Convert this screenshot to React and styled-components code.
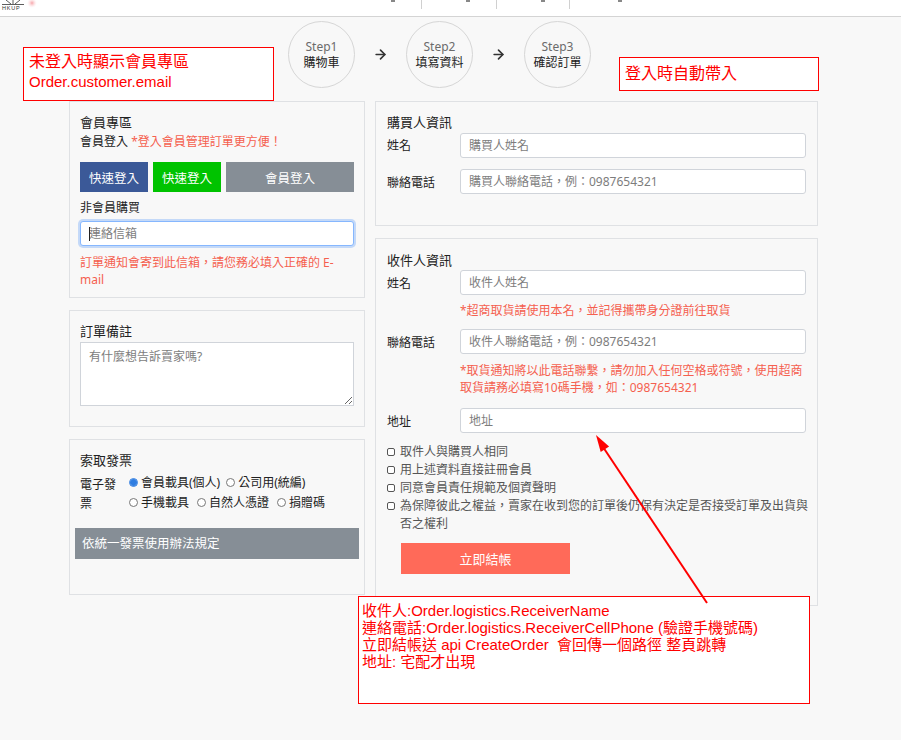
import React from 'react';
import styled, { createGlobalStyle } from 'styled-components';
import { ArrowRight } from 'lucide-react';

const GlobalStyle = createGlobalStyle`
  * { box-sizing: border-box; }
  body {
    margin: 0;
    background: #f8f8f8;
    font-family: "Noto Sans", "Noto Sans CJK TC", sans-serif;
    color: #222;
  }
`;

const Page = styled.div`
  position: relative;
  min-height: 740px;
  overflow: hidden;
`;

// top bar (mostly scrolled out of view)
const Header = styled.header`
  height: 17px;
  background: #fff;
  border-bottom: 1px solid #d4d4d4;
  display: flex;
  align-items: flex-start;
  overflow: hidden;
`;

const Logo = styled.svg`
  width: 40px;
  height: 16px;
  flex: none;
`;

const Nav = styled.nav`
  display: flex;
  margin-left: 306px;
`;

const NavItem = styled.div`
  position: relative;
  width: ${(p) => p.$w}px;
  height: 9px;
  border-left: 1px solid ${(p) => (p.$divided ? '#d0d0d0' : 'transparent')};

  &::before {
    content: '';
    position: absolute;
    top: 0;
    left: ${(p) => p.$mark}px;
    width: 4px;
    height: 2px;
    background: #888;
  }
`;

const Steps = styled.div`
  display: flex;
  align-items: center;
  justify-content: center;
  width: 749px;
  margin-left: 69px;
  padding: 4px 8px 13px 0;
`;

const StepCircle = styled.div`
  width: 67px;
  height: 67px;
  border: 1px solid #d6d6d6;
  border-radius: 50%;
  display: flex;
  flex-direction: column;
  align-items: center;
  justify-content: center;
  font-size: 12px;
  line-height: 16px;
  color: #222;

  span {
    color: #6b6b6b;
  }
`;

const StepArrow = styled.div`
  width: 51px;
  display: flex;
  justify-content: center;
  color: #333;
`;

const Columns = styled.div`
  display: flex;
  align-items: flex-start;
  gap: 10px;
  margin-left: 69px;
`;

const Column = styled.div`
  width: ${(p) => p.$w}px;
  display: flex;
  flex-direction: column;
  gap: 12px;
`;

const Panel = styled.section`
  background: #f8f8f8;
  border: 1px solid #dfe1e4;
  padding: ${(p) => p.$pad};
`;

const Title = styled.h3`
  margin: 0;
  font-size: 13px;
  line-height: 20px;
  font-weight: 400;
  color: #222;
`;

const Line = styled.div`
  font-size: 12px;
  line-height: 20px;
  margin-top: ${(p) => p.$mt || 0}px;
  color: #222;
`;

const Red = styled.span`
  color: #f5604f;
`;

const Hint = styled.div`
  font-size: 12px;
  line-height: 17px;
  color: #f5604f;
  margin-top: ${(p) => p.$mt || 0}px;
  grid-column: ${(p) => (p.$inGrid ? 2 : 'auto')};
`;

const ButtonRow = styled.div`
  display: grid;
  grid-template-columns: 68px 68px 1fr;
  gap: 5px;
  margin-top: 10px;
`;

const LoginButton = styled.button`
  height: 30px;
  border: none;
  border-radius: 0;
  background: ${(p) => p.$bg};
  color: #fff;
  font-family: inherit;
  font-size: 12.5px;
  padding: 0;
`;

const InputWrap = styled.div`
  position: relative;
  margin-top: ${(p) => p.$mt || 0}px;

  &::after {
    content: '';
    display: ${(p) => (p.$caret ? 'block' : 'none')};
    position: absolute;
    left: 9px;
    top: 6px;
    width: 1px;
    height: 14px;
    background: #222;
  }
`;

const TextInput = styled.input`
  display: block;
  width: 100%;
  height: 25px;
  padding: 0 8px;
  background: #fff;
  border: 1px solid ${(p) => (p.$focused ? '#86b7fe' : '#d0d4da')};
  border-radius: 3px;
  box-shadow: ${(p) => (p.$focused ? '0 0 0 2px rgba(100,160,250,0.35)' : 'none')};
  font-family: inherit;
  font-size: 12px;
  color: #222;
  outline: none;

  &::placeholder {
    color: #7d7d7d;
  }
`;

const NoteArea = styled.textarea`
  display: block;
  width: 100%;
  height: 64px;
  margin-top: 1px;
  padding: 5px 8px;
  background: #fff;
  border: 1px solid #d0d4da;
  border-radius: 0;
  font-family: inherit;
  font-size: 12px;
  line-height: 17px;
  outline: none;

  &::placeholder {
    color: #7d7d7d;
  }
`;

const InvoiceRow = styled.div`
  display: grid;
  grid-template-columns: 42px 1fr;
  column-gap: 7px;
  margin-top: 2px;
`;

const InvoiceLabel = styled.div`
  font-size: 12px;
  line-height: 19px;
  padding-top: 3px;
`;

const Options = styled.div`
  display: flex;
  flex-wrap: wrap;
  font-size: 12px;
  line-height: 19px;
`;

const Option = styled.label`
  display: flex;
  align-items: center;
  margin-right: ${(p) => p.$mr}px;
  white-space: nowrap;
`;

const Radio = styled.input.attrs({ type: 'radio' })`
  appearance: none;
  width: 9px;
  height: 9px;
  margin: 0 3px 0 0;
  border-radius: 50%;
  border: 1px solid #777;
  background: #fff;

  &:checked {
    border-color: #2f7de1;
    background: radial-gradient(circle, #2f7de1 0 2.6px, #fff 3.2px);
    box-shadow: inset 0 0 0 1px #2f7de1;
  }
`;

const GrayBar = styled.div`
  margin: 15px -5px 0;
  height: 31px;
  background: #868e96;
  color: #fff;
  font-size: 12.5px;
  line-height: 31px;
  padding-left: 7px;
`;

const FieldGrid = styled.div`
  display: grid;
  grid-template-columns: 73px 1fr;
  align-items: center;
`;

const FieldLabel = styled.label`
  font-size: 12px;
  color: #222;
  margin-top: ${(p) => p.$mt || 0}px;
`;

const Checks = styled.div`
  margin: 10px -6px 0 0;
  display: flex;
  flex-direction: column;
`;

const CheckItem = styled.label`
  display: flex;
  align-items: flex-start;
  font-size: 12px;
  line-height: 18px;
  color: #555;
`;

const CheckBox = styled.input.attrs({ type: 'checkbox' })`
  appearance: none;
  flex: none;
  width: 8px;
  height: 8px;
  margin: 5px 5px 0 0;
  border: 1px solid #555;
  border-radius: 2px;
  background: #fff;
`;

const CheckoutButton = styled.button`
  display: block;
  width: 169px;
  height: 31px;
  margin: 10px 0 0 14px;
  border: none;
  background: #ff6a59;
  color: #fff;
  font-family: inherit;
  font-size: 13px;
`;

// red sticky annotations laid over the page
const Note = styled.div`
  position: absolute;
  left: ${(p) => p.$left}px;
  top: ${(p) => p.$top}px;
  width: ${(p) => p.$w}px;
  height: ${(p) => p.$h}px;
  padding: ${(p) => p.$pad};
  background: #fff;
  border: 1px solid #f00;
  color: #f00;
  font-family: "Liberation Sans", "Noto Sans CJK TC", sans-serif;
  font-size: 15px;
  line-height: 17px;
`;

const NoteBig = styled.div`
  font-size: 16px;
  line-height: 20px;
`;

const NoteSmall = styled.div`
  font-size: 15px;
  line-height: 20px;
`;

const Overlay = styled.svg`
  position: absolute;
  left: 0;
  top: 0;
  pointer-events: none;
`;

const steps = [
  ['Step1', '購物車'],
  ['Step2', '填寫資料'],
  ['Step3', '確認訂單'],
];

const checks = [
  '取件人與購買人相同',
  '用上述資料直接註冊會員',
  '同意會員責任規範及個資聲明',
  '為保障彼此之權益，賣家在收到您的訂單後仍保有決定是否接受訂單及出貨與否之權利',
];

export default function App() {
  return (
    <Page>
      <GlobalStyle />
      <Header>
        <Logo viewBox="0 0 40 16">
          <defs>
            <radialGradient id="glow">
              <stop offset="0" stopColor="#f7a3a8" />
              <stop offset="1" stopColor="#fde8ea" stopOpacity="0" />
            </radialGradient>
          </defs>
          <circle cx="32" cy="3" r="5" fill="url(#glow)" />
          <path d="M6 0 L11 4 M13 0 L13 4 M20 0 L15 4 M2 4.5 H24" stroke="#333" strokeWidth="0.8" fill="none" />
          <text x="2" y="9.5" fontSize="5.5" fontFamily="Liberation Sans" letterSpacing="0.8" fill="#333">HKUP</text>
        </Logo>
        <Nav>
          <NavItem $w={75} $mark={44} />
          <NavItem $w={75} $mark={44} $divided />
          <NavItem $w={73} $mark={44} $divided />
          <NavItem $w={75} $mark={48} $divided />
        </Nav>
      </Header>

      <Steps>
        {steps.map(([a, b], i) => (
          <React.Fragment key={a}>
            {i > 0 && (
              <StepArrow>
                <ArrowRight size={15} strokeWidth={2.6} />
              </StepArrow>
            )}
            <StepCircle>
              <span>{a}</span>
              {b}
            </StepCircle>
          </React.Fragment>
        ))}
      </Steps>

      <Columns>
        <Column $w={296}>
          <Panel $pad="10px 10px 9px">
            <Title>會員專區</Title>
            <Line>
              會員登入 <Red>*登入會員管理訂單更方便！</Red>
            </Line>
            <ButtonRow>
              <LoginButton $bg="#3b5998">快速登入</LoginButton>
              <LoginButton $bg="#00c300">快速登入</LoginButton>
              <LoginButton $bg="#868e96">會員登入</LoginButton>
            </ButtonRow>
            <Line $mt={6}>非會員購買</Line>
            <InputWrap $mt={3} $caret>
              <TextInput $focused placeholder="連絡信箱" />
            </InputWrap>
            <Hint $mt={8}>訂單通知會寄到此信箱，請您務必填入正確的 E-mail</Hint>
          </Panel>

          <Panel $pad="10px 10px 20px">
            <Title>訂單備註</Title>
            <NoteArea placeholder="有什麼想告訴賣家嗎?" />
          </Panel>

          <Panel $pad="10px 10px 35px">
            <Title>索取發票</Title>
            <InvoiceRow>
              <InvoiceLabel>電子發票</InvoiceLabel>
              <Options>
                <Option $mr={6}>
                  <Radio name="inv" defaultChecked />
                  會員載具(個人)
                </Option>
                <Option $mr={6}>
                  <Radio name="inv" />
                  公司用(統編)
                </Option>
                <Option $mr={8}>
                  <Radio name="inv" />
                  手機載具
                </Option>
                <Option $mr={8}>
                  <Radio name="inv" />
                  自然人憑證
                </Option>
                <Option $mr={0}>
                  <Radio name="inv" />
                  捐贈碼
                </Option>
              </Options>
            </InvoiceRow>
            <GrayBar>依統一發票使用辦法規定</GrayBar>
          </Panel>
        </Column>

        <Column $w={443}>
          <Panel $pad="10px 11px 31px">
            <Title>購買人資訊</Title>
            <FieldGrid>
              <FieldLabel>姓名</FieldLabel>
              <InputWrap $mt={1}>
                <TextInput placeholder="購買人姓名" />
              </InputWrap>
              <FieldLabel $mt={11}>聯絡電話</FieldLabel>
              <InputWrap $mt={11}>
                <TextInput placeholder="購買人聯絡電話，例：0987654321" />
              </InputWrap>
            </FieldGrid>
          </Panel>

          <Panel $pad="11px 11px 31px">
            <Title>收件人資訊</Title>
            <FieldGrid>
              <FieldLabel>姓名</FieldLabel>
              <InputWrap>
                <TextInput placeholder="收件人姓名" />
              </InputWrap>
              <Hint $inGrid $mt={7}>*超商取貨請使用本名，並記得攜帶身分證前往取貨</Hint>
              <FieldLabel $mt={10}>聯絡電話</FieldLabel>
              <InputWrap $mt={10}>
                <TextInput placeholder="收件人聯絡電話，例：0987654321" />
              </InputWrap>
              <Hint $inGrid $mt={8}>
                *取貨通知將以此電話聯繫，請勿加入任何空格或符號，使用超商取貨請務必填寫10碼手機，如：0987654321
              </Hint>
              <FieldLabel $mt={12}>地址</FieldLabel>
              <InputWrap $mt={12}>
                <TextInput placeholder="地址" />
              </InputWrap>
            </FieldGrid>
            <Checks>
              {checks.map((c) => (
                <CheckItem key={c}>
                  <CheckBox />
                  {c}
                </CheckItem>
              ))}
            </Checks>
            <CheckoutButton>立即結帳</CheckoutButton>
          </Panel>
        </Column>
      </Columns>

      <Note $left={23} $top={47} $w={251} $h={54} $pad="4px 5px">
        <NoteBig>未登入時顯示會員專區</NoteBig>
        <NoteSmall>Order.customer.email</NoteSmall>
      </Note>
      <Note $left={619} $top={57} $w={200} $h={34} $pad="6px 5px">
        <NoteBig>登入時自動帶入</NoteBig>
      </Note>
      <Note $left={358} $top={596} $w={452} $h={108} $pad="5px 3px">
        <div>收件人:Order.logistics.ReceiverName</div>
        <div>連絡電話:Order.logistics.ReceiverCellPhone (驗證手機號碼)</div>
        <div>立即結帳送 api CreateOrder&nbsp; 會回傳一個路徑 整頁跳轉</div>
        <div>地址: 宅配才出現</div>
      </Note>

      <Overlay width="901" height="740">
        <line x1="707" y1="603" x2="603" y2="447" stroke="#f00" strokeWidth="2" />
        <polygon points="596,435 600.7,452.1 609.1,446.5" fill="#f00" />
      </Overlay>
    </Page>
  );
}
